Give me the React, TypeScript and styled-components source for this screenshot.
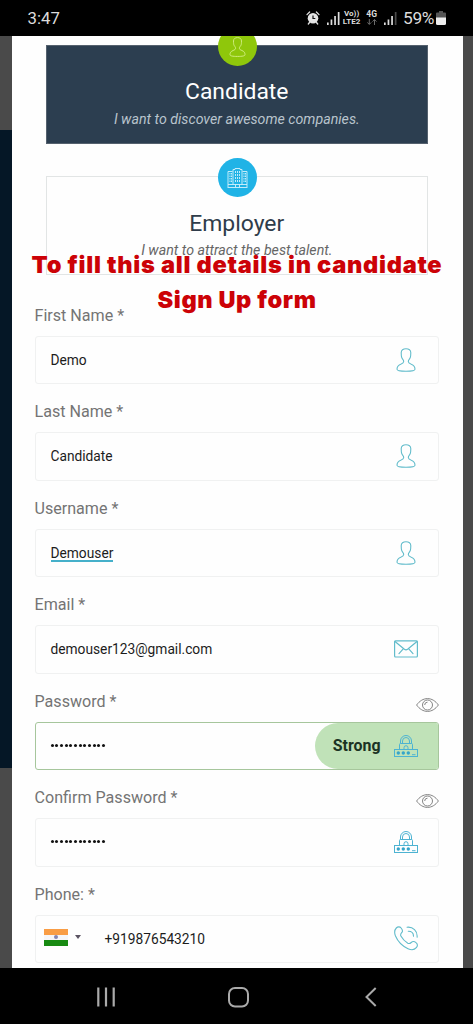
import React from 'react';
import styled, { createGlobalStyle, css } from 'styled-components';

const GlobalStyle = createGlobalStyle`
  * { box-sizing: border-box; }
  body { margin: 0; background: #000; font-family: Roboto, "Liberation Sans", sans-serif; }
`;

const Phone = styled.div`
  width: 473px;
  height: 1024px;
  display: flex;
  flex-direction: column;
  overflow: hidden;
  background: #000;
`;

const StatusBar = styled.header`
  height: 36px;
  flex: none;
  display: flex;
  align-items: center;
  justify-content: space-between;
  padding: 0 27px 0 27.5px;
  color: #dcdcdc;
`;

const Clock = styled.span`
  font-size: 16.8px;
  line-height: 36px;
`;

const StatusIcons = styled.div`
  display: flex;
  align-items: center;
  height: 36px;
`;

const Battery = styled.span`
  font-size: 17.3px;
  line-height: 36px;
  letter-spacing: -0.4px;
`;

const NetLabel = styled.div<{ $size: number; $width: number }>`
  width: ${(p) => p.$width}px;
  font-size: ${(p) => p.$size}px;
  font-weight: 700;
  line-height: 8px;
  text-align: center;
  white-space: nowrap;
`;

const Gap = styled.span<{ $w: number }>`
  width: ${(p) => p.$w}px;
`;

const Viewport = styled.main`
  height: 932px;
  flex: none;
  overflow: hidden;
  padding: 0 10.5px 0 11.5px;
  background: linear-gradient(#4a4a4a 0 94px, #051726 94px 732px, #4a4a4a 732px) left / 12px 100% no-repeat, #4a4a4a;
`;

const Panel = styled.section`
  position: relative;
  height: 932px;
  background: #fefefe;
  padding: 9px 23.5px 0 23px;
`;

const RoleCard = styled.div<{ $active?: boolean }>`
  position: relative;
  height: 99px;
  margin: 0 11.5px 32px;
  padding-top: ${(p) => (p.$active ? 30 : 31)}px;
  text-align: center;
  border: 1px solid ${(p) => (p.$active ? '#55616e' : '#e2e5e5')};
  background: ${(p) => (p.$active ? '#2c3e50' : '#fefefe')};
  color: ${(p) => (p.$active ? '#fff' : '#2f3c4a')};
`;

const RoleTitle = styled.h2`
  margin: 0;
  font-size: 22.9px;
  font-weight: 400;
  line-height: 32px;
`;

const RoleHint = styled.p<{ $active?: boolean }>`
  margin: ${(p) => (p.$active ? 0 : -1)}px 0 0;
  font-size: 14.2px;
  font-style: italic;
  line-height: 22px;
  color: ${(p) => (p.$active ? '#b9c4cd' : '#666')};
`;

const RoleBadge = styled.div<{ $color: string }>`
  position: absolute;
  top: -19px;
  left: 50%;
  margin-left: -19px;
  width: 39px;
  height: 39px;
  border-radius: 50%;
  display: flex;
  align-items: center;
  justify-content: center;
  background: ${(p) => p.$color};
`;

const Caption = styled.div`
  position: absolute;
  top: 211px;
  left: 0;
  right: 0;
  display: flex;
  flex-direction: column;
  align-items: center;
  color: #cc0207;
  font: 900 23.6px/35px Inter, "Liberation Sans", sans-serif;
`;

const CaptionLine = styled.span<{ $spacing: number }>`
  letter-spacing: ${(p) => p.$spacing}px;
  white-space: nowrap;
`;

const Form = styled.form`
  margin-top: -3.4px;
`;

const Field = styled.div`
  height: 96.5px;
`;

const LabelRow = styled.div`
  height: 24px;
  margin-bottom: 8px;
  display: flex;
  justify-content: space-between;
`;

const Label = styled.label`
  font-size: 16.1px;
  line-height: 24px;
  color: #747474;
`;

const EyeSlot = styled.span`
  padding-top: 8px;
  line-height: 0;
`;

const InputBox = styled.div<{ $valid?: boolean }>`
  height: 48.5px;
  display: flex;
  align-items: center;
  justify-content: space-between;
  border: 1px solid ${(p) => (p.$valid ? '#a6c69c' : '#f0f1f1')};
  border-radius: 3px;
  padding-left: 15px;
  overflow: hidden;
`;

const Value = styled.span<{ $underlined?: boolean }>`
  margin-top: -0.6px;
  font-size: 13.75px;
  line-height: 16px;
  color: #1c1c1c;
  ${(p) =>
    p.$underlined &&
    css`
      box-shadow: 0 1px 0 #45b0ca, inset 0 -1px 0 #45b0ca;
    `}
`;

const Dots = styled.span`
  display: flex;
  gap: 1.6px;
  margin-top: -1px;

  i {
    width: 3.1px;
    height: 3.1px;
    border-radius: 50%;
    background: #111;
  }
`;

const Trailing = styled.span<{ $strong?: boolean }>`
  display: flex;
  align-items: center;
  justify-content: flex-end;
  align-self: stretch;
  padding: 0 20px 0 0;
  ${(p) =>
    p.$strong &&
    css`
      width: 123px;
      border-radius: 24px 0 0 24px;
      background: #c0e2b8;
    `}
`;

const Strength = styled.b`
  margin-right: 13.5px;
  font-size: 15.9px;
  color: #1b3324;
`;

const PhoneValue = styled.span`
  display: flex;
  align-items: center;
  margin-left: -6.5px;
`;

const Flag = styled.span`
  width: 24px;
  height: 17px;
  display: flex;
  align-items: center;
  justify-content: center;
  margin-top: -3px;
  background: linear-gradient(#f99d45 0 6px, #f6f6f8 6px 11px, #188a12 11px);

  &::after {
    content: '';
    width: 4px;
    height: 4px;
    border-radius: 50%;
    background: #8585b3;
  }
`;

const Caret = styled.span`
  margin: -4px 23.5px 0 7px;
  border: 3px solid transparent;
  border-top: 4.5px solid #5a5362;
  border-bottom: 0;
`;

const NavBar = styled.nav`
  height: 56px;
  flex: none;
  display: grid;
  grid-template-columns: 131px 137px 12px;
  align-items: center;
  padding: 2px 0 0 97px;
`;

const cyan = '#62bccb';

const UserIcon = ({ color = cyan, w = 20, h = 24, sw = 1.1 }: { color?: string; w?: number; h?: number; sw?: number }) => (
  <svg width={w} height={h} viewBox="0 0 20 24" fill="none" stroke={color} strokeWidth={sw} strokeLinejoin="round">
    <path d="M10 .7C7.200 .7 5.200 2.200 5.200 4.800C5.200 7.300 5.300 8.600 5.800 9.800C6.300 11 7.700 11.900 7.700 13.400C7.700 14.900 6.700 15.400 4.700 16.200C2 17.200 1 18.900 1 21.300C1 22.700 4 23.300 10 23.300S19 22.700 19 21.300C19 18.900 18 17.200 15.300 16.200C13.300 15.400 12.300 14.900 12.300 13.400C12.300 11.900 13.700 11 14.200 9.800C14.700 8.600 14.800 7.300 14.800 4.800C14.800 2.200 12.800 .7 10 .7Z" />
  </svg>
);

const BuildingIcon = () => (
  <svg width="21" height="20" viewBox="0 0 21 20" fill="none" stroke="#d5f2fc" strokeWidth="0.9">
    <path d="M.5 19.500H20.500M1 19V3.500H5.500M6 16.500V1.500H8V.5H13V1.500H15V16.500H6M15.500 3.500H20V19M1 16.500H6M15 16.500H20M8.500 19V16.500M12.500 19V16.500" />
    <path d="M8.500 3V15M10.500 3V15M12.500 3V15" strokeDasharray="2 1" />
    <path d="M3 5V15M4.500 5V15M17 5V15M18.500 5V15" strokeDasharray="1.500 1" />
  </svg>
);

const MailIcon = () => (
  <svg width="24" height="18" viewBox="0 0 24 18" fill="none" stroke={cyan} strokeWidth="1.200" strokeLinecap="round">
    <rect x=".6" y=".8" width="22.800" height="16.200" rx="1" />
    <path d="M1 1.500L10.400 9.300Q12 10.500 13.600 9.300L23 1.500M8.800 9.400L5 13.600M15.200 9.400L19 13.600" />
  </svg>
);

const LockIcon = () => (
  <svg width="24" height="22" viewBox="0 0 24 22" fill="none" stroke="#4db3d2" strokeWidth="1">
    <rect x=".5" y="14.500" width="23" height="7" />
    <path d="M5.500 14.500V9.500Q5.500 8.500 6.500 8.500H17.500Q18.500 8.500 18.500 9.500V14.500M6.500 8.500V6A5.500 5.500 0 0 1 17.500 6V8.500M8.500 8.500V6A3.500 3.500 0 0 1 15.500 6V8.500M10 14V12.700A2 2 0 0 1 14 12.700V14M18 19.700H21.500" />
    <g fill="#35a5ca" stroke="none">
      <circle cx="4.300" cy="18" r="1.700" />
      <circle cx="9.300" cy="18" r="1.700" />
      <circle cx="14.300" cy="18" r="1.700" />
    </g>
  </svg>
);

const EyeIcon = () => (
  <svg width="23" height="14" viewBox="0 0 23 14" fill="none" stroke="#777" strokeWidth=".9">
    <path d="M.6 7C3.500 3 7.300 .6 11.500 .6S19.500 3 22.400 7C19.500 11 15.700 13.400 11.500 13.400S3.500 11 .6 7Z" />
    <circle cx="11.500" cy="7" r="5" />
    <path d="M8.700 7A2.800 2.800 0 0 1 11.500 4.200" />
  </svg>
);

const CallIcon = () => (
  <svg width="24" height="25" viewBox="0 0 24 25" fill="none" stroke={cyan} strokeWidth="1.100" strokeLinecap="round" strokeLinejoin="round">
    <path d="M2.300 2C3.700 .5 5.900 .5 7.100 2C8.600 3.800 9 4.900 8.100 6.200C6.800 7.900 6 8.300 6.900 10C8.700 13.300 11 15.500 13.800 17.200C15.200 18 15.900 17.700 17.200 16.500C18.900 15 20.300 15.200 22 16.700C23.800 18.200 23.800 20 22.300 21.700C20.500 23.800 17.500 24.300 14 22.700C8.600 20.200 3.800 15.400 1.500 10C.2 6.700 .4 4 2.300 2Z" />
    <path d="M13 1.200C19 .5 23.700 5 23.100 11.200M14.300 5.200C17.500 5.200 19.500 7.200 19.500 10.200" />
  </svg>
);

const AlarmIcon = () => (
  <svg width="14" height="14" viewBox="0 0 14 14">
    <g fill="none" stroke="#ddd" strokeWidth="1.300" strokeLinecap="round">
      <path d="M1 3.600L3.600 1M13 3.600L10.400 1M3.500 11.500L2.300 13M10.500 11.500L11.700 13" />
    </g>
    <circle cx="7" cy="7.300" r="5.300" fill="#e5e5e5" />
    <path d="M7 4.500V7.500H9.300" fill="none" stroke="#111" strokeWidth="1.200" />
  </svg>
);

const SignalIcon = ({ weak }: { weak?: boolean }) => (
  <svg width="13" height="13" viewBox="0 0 13 13" fill="#ddd">
    <rect x="0" y="10.500" width="1.700" height="2.500" />
    <rect x="3.600" y="7.500" width="1.700" height="5.500" />
    <rect x="7.200" y="4" width="1.700" height="9" />
    <rect x="10.800" y="0" width="1.700" height="13" fill={weak ? '#4a4a4a' : '#ddd'} />
  </svg>
);

const DataArrows = () => (
  <svg width="10" height="6" viewBox="0 0 10 6" fill="none" stroke="#777" strokeWidth=".9">
    <path d="M2.300 0V5.300M.3 3.400L2.300 5.400L4.300 3.400M7.500 6V.7M5.500 2.600L7.500 .6L9.500 2.600" />
  </svg>
);

const BatteryIcon = () => (
  <svg width="10" height="14" viewBox="0 0 10 14">
    <path d="M3 0H7V1.500H9Q10 1.500 10 2.500V7H0V2.500Q0 1.500 1 1.500H3Z" fill="#555" />
    <path d="M0 6.500H10V12.500Q10 14 8.500 14H1.500Q0 14 0 12.500Z" fill="#eee" />
  </svg>
);

const PasswordDots = () => (
  <Dots>
    {Array.from({ length: 12 }, (_, i) => (
      <i key={i} />
    ))}
  </Dots>
);

interface FormFieldProps {
  label: string;
  icon: React.ReactNode;
  children: React.ReactNode;
  eye?: boolean;
  strength?: string;
}

const FormField = ({ label, icon, children, eye, strength }: FormFieldProps) => (
  <Field>
    <LabelRow>
      <Label>{label}</Label>
      {eye && (
        <EyeSlot>
          <EyeIcon />
        </EyeSlot>
      )}
    </LabelRow>
    <InputBox $valid={!!strength}>
      {children}
      <Trailing $strong={!!strength}>
        {strength && <Strength>{strength}</Strength>}
        {icon}
      </Trailing>
    </InputBox>
  </Field>
);

const InsetUser = styled.span`
  display: flex;
  padding-right: 2px;
`;

const user = (
  <InsetUser>
    <UserIcon />
  </InsetUser>
);

export default function App() {
  return (
    <Phone>
      <GlobalStyle />
      <StatusBar>
        <Clock>3:47</Clock>
        <StatusIcons>
          <AlarmIcon />
          <Gap $w={7} />
          <SignalIcon />
          <Gap $w={3} />
          <NetLabel $size={8} $width={18}>
            Vo))
            <br />
            LTE2
          </NetLabel>
          <Gap $w={5} />
          <NetLabel $size={8.5} $width={12}>
            4G
            <br />
            <DataArrows />
          </NetLabel>
          <Gap $w={6} />
          <SignalIcon weak />
          <Gap $w={6.5} />
          <Battery>59%</Battery>
          <Gap $w={2} />
          <BatteryIcon />
        </StatusIcons>
      </StatusBar>

      <Viewport>
        <Panel>
          <RoleCard $active>
            <RoleBadge $color="#8fc70b">
              <UserIcon color="#d3ef86" w={17} h={20} />
            </RoleBadge>
            <RoleTitle>Candidate</RoleTitle>
            <RoleHint $active>I want to discover awesome companies.</RoleHint>
          </RoleCard>
          <RoleCard>
            <RoleBadge $color="#20b3e6">
              <BuildingIcon />
            </RoleBadge>
            <RoleTitle>Employer</RoleTitle>
            <RoleHint>I want to attract the best talent.</RoleHint>
          </RoleCard>

          <Form>
            <FormField label="First Name *" icon={user}>
              <Value>Demo</Value>
            </FormField>
            <FormField label="Last Name *" icon={user}>
              <Value>Candidate</Value>
            </FormField>
            <FormField label="Username *" icon={user}>
              <Value $underlined>Demouser</Value>
            </FormField>
            <FormField label="Email *" icon={<MailIcon />}>
              <Value>demouser123@gmail.com</Value>
            </FormField>
            <FormField label="Password *" icon={<LockIcon />} eye strength="Strong">
              <PasswordDots />
            </FormField>
            <FormField label="Confirm Password *" icon={<LockIcon />} eye>
              <PasswordDots />
            </FormField>
            <FormField label="Phone: *" icon={<CallIcon />}>
              <PhoneValue>
                <Flag />
                <Caret />
                <Value>+919876543210</Value>
              </PhoneValue>
            </FormField>
          </Form>

          <Caption>
            <CaptionLine $spacing={0.71}>To fill this all details in candidate</CaptionLine>
            <CaptionLine $spacing={0.6}>Sign Up form</CaptionLine>
          </Caption>
        </Panel>
      </Viewport>

      <NavBar>
        <svg width="19" height="20" viewBox="0 0 19 20" stroke="#aaa" strokeWidth="2.200">
          <path d="M1.300 .5V19.500M9 .5V19.500M16.700 .5V19.500" />
        </svg>
        <svg width="22" height="21" viewBox="0 0 22 21" fill="none" stroke="#aaa" strokeWidth="2">
          <rect x="1" y="1" width="19" height="18.500" rx="6" />
        </svg>
        <svg width="12" height="20" viewBox="0 0 12 20" fill="none" stroke="#aaa" strokeWidth="2">
          <path d="M10.700 1L1.500 10L10.700 19" />
        </svg>
      </NavBar>
    </Phone>
  );
}
